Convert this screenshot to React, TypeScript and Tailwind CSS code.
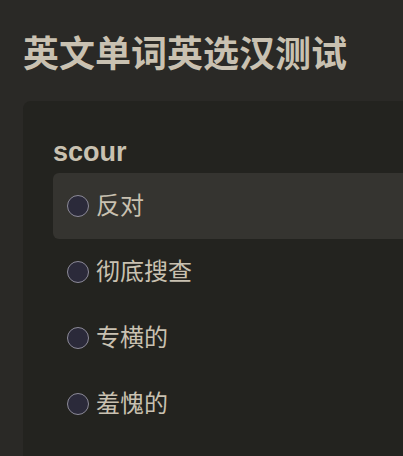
const options = ['反对', '彻底搜查', '专横的', '羞愧的']

export default function App() {
  const selected = 0
  return (
    <div
      className="h-[456px] w-[403px] overflow-hidden bg-[#2a2926] pl-[23px] pt-[33px]"
      style={{ fontFamily: '"Liberation Sans", "Noto Sans CJK SC", sans-serif' }}
    >
      <h1 className="text-[36px] font-bold leading-[43px] text-[#c9c1b1]">英文单词英选汉测试</h1>
      <div className="mt-[25px] h-[400px] rounded-tl-lg bg-[#23231f] pl-[30px] pt-[34px]">
        <div className="text-[27px] font-bold leading-[34px] text-[#c9c1b1]">scour</div>
        <div className="mt-[4px] flex flex-col">
          {options.map((opt, i) => (
            <div
              key={opt}
              className={
                'flex h-[66px] items-center gap-[7px] rounded-l-md pl-[14px] ' +
                (i === selected ? 'bg-[#353430]' : '')
              }
            >
              <span className="h-[22px] w-[22px] shrink-0 rounded-full border border-[#8c8a98] bg-[#2b2a3a]" />
              <span className="text-[24px] leading-none text-[#c9c1b1]">{opt}</span>
            </div>
          ))}
        </div>
      </div>
    </div>
  )
}
